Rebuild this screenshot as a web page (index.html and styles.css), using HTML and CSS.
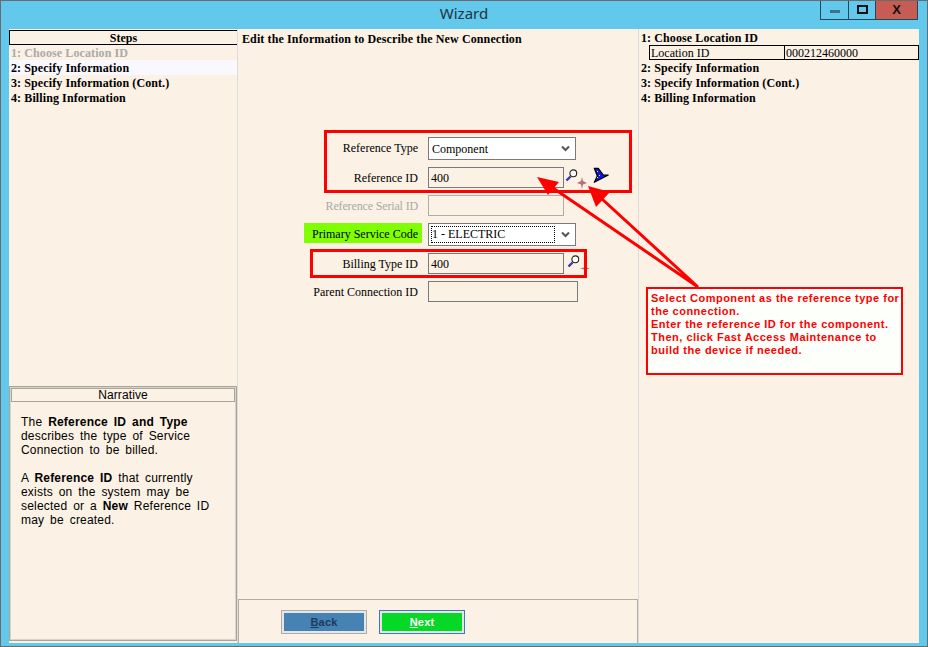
FILE: index.html
```html
<!DOCTYPE html>
<html lang="en">
<head>
    <meta charset="UTF-8">
    <title>Wizard</title>
    <link rel="stylesheet" href="styles.css">
</head>
<body>
    <div class="window">
        <div class="titlebar">
            <span class="title">Wizard</span>
            <div class="winbtns">
                <div class="winbtn"><span class="min-glyph"></span></div>
                <div class="winbtn"><span class="max-glyph"></span></div>
                <div class="winbtn close">X</div>
            </div>
        </div>

        <div class="client">
            <!-- Left column -->
            <div class="left">
                <div class="steps-head">Steps</div>
                <div class="step done">1: Choose Location ID</div>
                <div class="step current">2: Specify Information</div>
                <div class="step">3: Specify Information (Cont.)</div>
                <div class="step">4: Billing Information</div>
                <div class="narrative">
                    <div class="narrative-head">Narrative</div>
                    <div class="narrative-body">
                        <p>The <b>Reference ID and Type</b><br>describes the type of Service<br>Connection to be billed.</p>
                        <p>A <b>Reference ID</b> that currently<br>exists on the system may be<br>selected or a <b>New</b> Reference ID<br>may be created.</p>
                    </div>
                </div>
            </div>

            <!-- Center column -->
            <div class="center">
                <h1 class="heading">Edit the Information to Describe the New Connection</h1>
                <div class="form">
                    <div class="row">
                        <label>Reference Type</label>
                        <div class="select">Component
                            <svg class="chev" width="9" height="7" viewBox="0 0 9 7"><path d="M1 1.5 L4.5 5 L8 1.5" fill="none" stroke="#555" stroke-width="2"/></svg>
                        </div>
                    </div>
                    <div class="row">
                        <label>Reference ID</label>
                        <input class="input" type="text" value="400">
                        <svg class="lens" width="16" height="16" viewBox="0 0 16 16"><path d="M2.500 12.500 L6.500 8.500" stroke="#3a36b0" stroke-width="2.400"/><circle cx="9.300" cy="5.300" r="3.400" fill="#fff" stroke="#222" stroke-width="1.100"/></svg>
                        <svg class="hat" width="17" height="16" viewBox="0 0 17 16"><path d="M1.300 1.300 L5.300 1.300 L10.300 8 L15.300 8 L1.300 15.300 L4.300 9 Z" fill="#1414e0" stroke="#000" stroke-width="1.200" stroke-linejoin="round"/><rect x="4" y="4" width="1" height="1" fill="#ff0"/><rect x="6" y="8" width="1" height="1" fill="#ff0"/><rect x="4" y="10" width="1" height="1" fill="#ff0"/></svg>
                    </div>
                    <div class="row disabled">
                        <label>Reference Serial ID</label>
                        <input class="input" type="text" disabled>
                    </div>
                    <div class="row">
                        <label class="required">Primary Service Code</label>
                        <div class="select"><span class="focus">1 - ELECTRIC</span>
                            <svg class="chev" width="9" height="7" viewBox="0 0 9 7"><path d="M1 1.5 L4.5 5 L8 1.5" fill="none" stroke="#555" stroke-width="2"/></svg>
                        </div>
                    </div>
                    <div class="row">
                        <label>Billing Type ID</label>
                        <input class="input" type="text" value="400">
                        <svg class="lens shifted" width="16" height="16" viewBox="0 0 16 16"><path d="M2.500 12.500 L6.500 8.500" stroke="#3a36b0" stroke-width="2.400"/><circle cx="9.300" cy="5.300" r="3.400" fill="#fff" stroke="#222" stroke-width="1.100"/></svg>
                    </div>
                    <div class="row">
                        <label>Parent Connection ID</label>
                        <input class="input wide" type="text">
                    </div>
                </div>
                <div class="buttons">
                    <button class="btn back"><u>B</u>ack</button>
                    <button class="btn next"><u>N</u>ext</button>
                </div>
            </div>

            <!-- Right column -->
            <div class="right">
                <div class="step">1: Choose Location ID</div>
                <div class="loc-row">
                    <div class="loc-cell">Location ID</div>
                    <div class="loc-cell">000212460000</div>
                </div>
                <div class="step">2: Specify Information</div>
                <div class="step">3: Specify Information (Cont.)</div>
                <div class="step">4: Billing Information</div>
            </div>
        </div>

        <!-- Annotations drawn over the screen -->
        <svg class="arrows" width="928" height="647" viewBox="0 0 928 647">
            <path d="M582 177 L583 181 L587 183 L583 184.500 L582 189 L581 184.500 L577 183 L581 181 Z" fill="#b8707c"/>
            <path d="M585 265 L586 267.500 L590 268.500 L586 269.500 L585 272 L584 269.500 L580 268.500 L584 267.500 Z" fill="#b8707c"/>
            <path d="M698 287 L553 188 M698 287 L602 199" stroke="#f00" stroke-width="3" fill="none"/>
            <path d="M537 177 L559 182 L548 195 Z" fill="#f00"/>
            <path d="M588 186 L610 192 L596 207 Z" fill="#f00"/>
        </svg>
        <div class="redbox box-a"></div>
        <div class="redbox box-b"></div>
        <div class="callout">Select Component as the reference type for the connection.<br>Enter the reference ID for the component.<br>Then, click Fast Access Maintenance to<br>build the device if needed.</div>
    </div>
</body>
</html>
```

FILE: styles.css
```css
* {
    box-sizing: border-box;
}
body {
    margin: 0;
    background: #62c8ec;
}
.window {
    position: relative;
    width: 928px;
    height: 647px;
    display: flex;
    flex-direction: column;
    background: #62c8ec;
    border: 1px solid #6b6b6b;
    overflow: hidden;
}
.titlebar {
    height: 28px;
    flex: none;
    display: flex;
    justify-content: center;
    position: relative;
}
.title {
    font-family: "Noto Sans", sans-serif;
    font-size: 15px;
    line-height: 24px;
    color: #1f3440;
}
.winbtns {
    position: absolute;
    top: -1px;
    right: 9px;
    display: flex;
    height: 20px;
    border: 1px solid #24485a;
    border-top: none;
}
.winbtn {
    width: 28px;
    display: flex;
    align-items: center;
    justify-content: center;
    border-right: 1px solid #24485a;
}
.winbtn + .winbtn {
    width: 27px;
}
.winbtn.close {
    width: 41px;
    border-right: none;
    background: #c75c54;
    font: bold 13px "Liberation Sans", sans-serif;
    color: #111;
}
.min-glyph {
    width: 10px;
    height: 3px;
    margin-top: 4px;
    background: #3a7488;
}
.max-glyph {
    width: 11px;
    height: 9px;
    border: 2px solid #111;
}
.client {
    flex: 1;
    display: flex;
    margin: 0 8px 3px 8px;
    background: #fbf1e4;
    font-family: "Liberation Serif", serif;
    font-size: 12px;
    color: #000;
}
.left {
    width: 229px;
    flex: none;
    display: flex;
    flex-direction: column;
    padding-top: 1px;
    border-right: 1px solid #dcdcdc;
}
.steps-head {
    height: 15px;
    line-height: 15px;
    text-align: center;
    font-weight: bold;
    border: 1px solid #000;
    border-right: none;
}
.step {
    height: 15px;
    line-height: 17px;
    padding-left: 2px;
    font-weight: bold;
    letter-spacing: 0.1px;
}
.step.done {
    color: #aaa;
}
.step.current {
    background: #faf8ff;
}
.narrative {
    margin-top: auto;
    margin-bottom: 2px;
    height: 255px;
    border: 1px solid #aaa59b;
    outline: 1px solid #d8d4ca;
    outline-offset: -2px;
    padding: 1px;
    font-family: "Liberation Sans", sans-serif;
}
.narrative-head {
    height: 14px;
    line-height: 13px;
    text-align: center;
    border: 1px solid #aaa59b;
    letter-spacing: 0.1px;
}
.narrative-body {
    padding: 13px 10px 0 10px;
    line-height: 14px;
    letter-spacing: 0.2px;
    word-spacing: 2.3px;
}
.narrative-body p {
    margin: 0 0 14px;
}
.center {
    width: 401px;
    flex: none;
    display: flex;
    flex-direction: column;
    border-right: 1px solid #dcdcdc;
}
.heading {
    margin: 3px 0 0;
    padding-left: 4px;
    font-size: 12px;
    line-height: 15px;
    letter-spacing: 0.12px;
}
.form {
    margin-top: 90px;
    display: flex;
    flex-direction: column;
    gap: 7px;
}
.row {
    display: flex;
    align-items: flex-start;
}
.row label {
    width: 180px;
    height: 21px;
    margin-right: 10px;
    text-align: right;
    line-height: 23px;
    flex: none;
}
.row.disabled label {
    color: #a9a9a9;
    letter-spacing: -0.15px;
}
.row label.required {
    width: 118px;
    height: 20px;
    margin-left: 66px;
    margin-right: 6px;
    padding-right: 4px;
    white-space: nowrap;
    background: #7fff00;
}
.input {
    width: 136px;
    height: 21px;
    padding: 2px 2px 0;
    border: 1px solid #7a7a7a;
    background: #fbf1e4;
    font: 12px "Liberation Serif", serif;
    color: #000;
}
.input.wide {
    width: 150px;
}
.input:disabled {
    border-color: #adadad;
}
.select {
    position: relative;
    width: 148px;
    height: 23px;
    padding: 3px;
    line-height: 16px;
    border: 1px solid #7a7a7a;
    background: #fff;
}
.focus {
    display: block;
    width: 124px;
    margin: -1px 0 0 -1px;
    padding-left: 1px;
    line-height: 17px;
    outline: 1px dotted #000;
    outline-offset: -1px;
}
.chev {
    position: absolute;
    right: 5px;
    top: 7px;
}
.lens {
    margin: 1px 0 0 0;
    flex: none;
}
.lens.shifted {
    margin-left: 2px;
}
.hat {
    margin: 0 0 0 13px;
    flex: none;
}
.buttons {
    margin-top: auto;
    height: 44px;
    display: flex;
    gap: 12px;
    padding: 10px 0 0 42px;
    border: 1px solid #b3ada0;
    border-bottom: none;
}
.btn {
    width: 86px;
    height: 24px;
    padding: 0;
    border: 1px solid #adadad;
    outline: 2px solid #e6e6e6;
    outline-offset: -3px;
    font: bold 11px "Liberation Sans", sans-serif;
    letter-spacing: 0.2px;
}
.btn.back {
    background: #4682b4;
    color: #1d3a5c;
}
.btn.next {
    background: #06d826;
    border-color: #3a7ab8;
    color: #fff;
}
.right {
    flex: 1;
    padding-top: 1px;
}
.loc-row {
    display: flex;
    height: 15px;
    margin-left: 10px;
    border: 1px solid #000;
}
.loc-cell {
    width: 134px;
    padding-left: 1px;
    line-height: 14px;
}
.loc-cell + .loc-cell {
    flex: 1;
    border-left: 1px solid #000;
}
.redbox {
    position: absolute;
    border: 3px solid #f00;
}
.box-a {
    left: 323px;
    top: 129px;
    width: 308px;
    height: 63px;
}
.box-b {
    left: 309px;
    top: 248px;
    width: 277px;
    height: 29px;
}
.arrows {
    position: absolute;
    left: -1px;
    top: -1px;
}
.callout {
    position: absolute;
    left: 645px;
    top: 286px;
    width: 257px;
    height: 88px;
    padding: 3px 0 0 3px;
    border: 2px solid #f00;
    background: #fdfffb;
    color: #f00;
    font: bold 11px/13px "Liberation Sans", sans-serif;
    letter-spacing: 0.5px;
}
```
